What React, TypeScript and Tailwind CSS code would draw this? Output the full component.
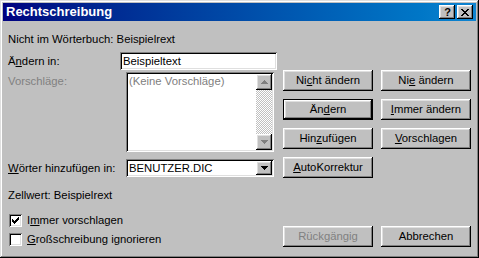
import React from "react";

const raised =
  "bg-[#c0c0c0] shadow-[inset_-1px_-1px_#000,inset_1px_1px_#fff,inset_-2px_-2px_#808080,inset_2px_2px_#dfdfdf]";
const sunken =
  "bg-white shadow-[inset_1px_1px_#808080,inset_-1px_-1px_#fff,inset_2px_2px_#000,inset_-2px_-2px_#dfdfdf]";

function Btn({
  children,
  isDefault,
  disabled,
}: {
  children: React.ReactNode;
  isDefault?: boolean;
  disabled?: boolean;
}) {
  return (
    <div
      className={`h-[21px] w-[90px] flex items-center justify-center ${
        isDefault ? "border border-black" : ""
      } ${raised} ${disabled ? "text-[#808080]" : "text-black"}`}
    >
      <span className="leading-[13px]">{children}</span>
    </div>
  );
}

function Arrow({ down, color }: { down?: boolean; color: string }) {
  return (
    <svg width="7" height="4" viewBox="0 0 7 4" shapeRendering="crispEdges">
      {down ? (
        <path d="M0 0h7v1H0zM1 1h5v1H1zM2 2h3v1H2zM3 3h1v1H3z" fill={color} />
      ) : (
        <path d="M3 0h1v1H3zM2 1h3v1H2zM1 2h5v1H1zM0 3h7v1H0z" fill={color} />
      )}
    </svg>
  );
}

function Checkbox({ checked }: { checked?: boolean }) {
  return (
    <div className={`w-[13px] h-[13px] flex items-center justify-center ${sunken}`}>
      {checked && (
        <svg width="7" height="7" viewBox="0 0 7 7" shapeRendering="crispEdges">
          <path
            d="M6 0h1v3H6zM5 1h1v3H5zM4 2h1v3H4zM3 3h1v3H3zM2 4h1v3H2zM1 3h1v3H1zM0 2h1v3H0z"
            fill="#000"
          />
        </svg>
      )}
    </div>
  );
}

export default function App() {
  return (
    <div className="w-[479px] h-[258px] bg-[#c0c0c0] p-[3px] flex flex-col font-['Liberation_Sans',Arial,sans-serif] text-[11.3px] text-black shadow-[inset_-1px_-1px_#000,inset_1px_1px_#dfdfdf,inset_-2px_-2px_#808080,inset_2px_2px_#fff]">
      {/* title bar */}
      <div className="h-[18px] flex items-center pl-[3px] pr-[3px] bg-gradient-to-r from-[#000080] to-[#1084d0]">
        <span className="flex-1 text-white font-bold text-[13px] leading-[18px]">
          Rechtschreibung
        </span>
        <div className={`w-[16px] h-[14px] flex items-center justify-center ${raised}`}>
          <span className="font-bold text-[11px] leading-[11px] pl-[1px]">?</span>
        </div>
        <div className={`ml-[2px] w-[16px] h-[14px] flex items-center justify-center ${raised}`}>
          <svg width="8" height="7" viewBox="0 0 8 7" shapeRendering="crispEdges">
            <path
              d="M0 0h2v1H0zM6 0h2v1H6zM1 1h2v1H1zM5 1h2v1H5zM2 2h4v1H2zM3 3h2v1H3zM2 4h4v1H2zM1 5h2v1H1zM5 5h2v1H5zM0 6h2v1H0zM6 6h2v1H6z"
              fill="#000"
            />
          </svg>
        </div>
      </div>

      {/* body */}
      <div className="flex-1 flex px-[5px] pb-[8px] gap-[6px]">
        {/* left column */}
        <div className="w-[269px] flex flex-col pt-[12px]">
          <div className="leading-[13px]">Nicht im Wörterbuch: Beispielrext</div>

          <div className="mt-[6px] flex items-center h-[18px]">
            <span className="w-[112px] leading-[13px]">
              Ä<u>n</u>dern in:
            </span>
            <div className={`w-[157px] h-[18px] flex items-center pl-[3px] ${sunken}`}>
              <span className="leading-[13px]">Beispieltext</span>
            </div>
          </div>

          <div className="mt-[2px] flex">
            <span className="w-[118px] leading-[13px] pt-[3px] text-[#808080]">
              Vorschläge:
            </span>
            <div className={`w-[148px] h-[80px] flex p-[2px] ${sunken}`}>
              <div className="flex-1 pl-[1px] pt-[1px] leading-[13px] text-[#808080]">
                (Keine Vorschläge)
              </div>
              <div className="w-[16px] flex flex-col">
                <div className={`h-[16px] flex items-center justify-center ${raised}`}>
                  <Arrow color="#808080" />
                </div>
                <div className="flex-1 bg-[repeating-conic-gradient(#c0c0c0_0_25%,#fff_0_50%)] bg-[length:2px_2px]" />
                <div className={`h-[16px] flex items-center justify-center ${raised}`}>
                  <Arrow down color="#808080" />
                </div>
              </div>
            </div>
          </div>

          <div className="mt-[7px] flex items-center h-[18px]">
            <span className="w-[118px] leading-[13px]">
              <u>W</u>örter hinzufügen in:
            </span>
            <div className={`w-[148px] h-[18px] flex p-[2px] ${sunken}`}>
              <div className="flex-1 flex items-center pl-[1px] leading-[13px]">
                BENUTZER.DIC
              </div>
              <div className={`w-[16px] flex items-center justify-center ${raised}`}>
                <Arrow down color="#000" />
              </div>
            </div>
          </div>

          <div className="mt-[12px] leading-[13px]">Zellwert: Beispielrext</div>

          <div className="mt-[12px] flex items-center gap-[5px] pl-[1px]">
            <Checkbox checked />
            <span className="leading-[13px]">
              I<u>m</u>mer vorschlagen
            </span>
          </div>
          <div className="mt-[6px] flex items-center gap-[5px] pl-[1px]">
            <Checkbox />
            <span className="leading-[13px]">
              <u>G</u>roßschreibung ignorieren
            </span>
          </div>
        </div>

        {/* right column */}
        <div className="w-[188px] flex flex-col pt-[49px]">
          <div className="grid grid-cols-2 gap-x-[8px] gap-y-[8px]">
            <Btn>
              Ni<u>c</u>ht ändern
            </Btn>
            <Btn>
              Ni<u>e</u> ändern
            </Btn>
            <Btn isDefault>
              Än<u>d</u>ern
            </Btn>
            <Btn>
              <u>I</u>mmer ändern
            </Btn>
            <Btn>
              Hin<u>z</u>ufügen
            </Btn>
            <Btn>
              <u>V</u>orschlagen
            </Btn>
            <Btn>
              <u>A</u>utoKorrektur
            </Btn>
          </div>
          <div className="mt-auto grid grid-cols-2 gap-x-[8px]">
            <Btn disabled>Rückgängig</Btn>
            <Btn>Abbrechen</Btn>
          </div>
        </div>
      </div>
    </div>
  );
}
